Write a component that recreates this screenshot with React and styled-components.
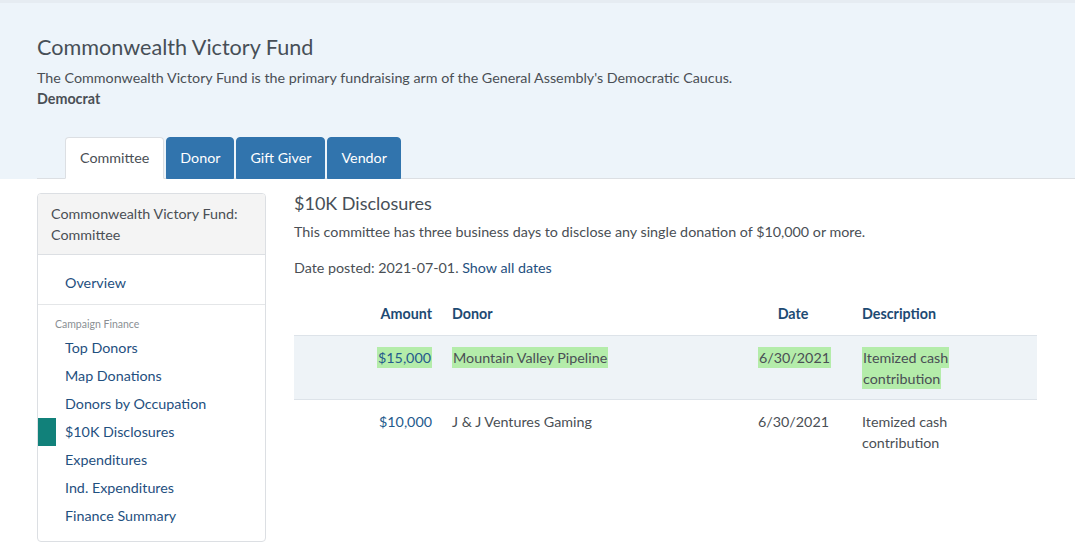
import React from "react";
import styled, { createGlobalStyle } from "styled-components";

const GlobalStyle = createGlobalStyle`
  body {
    margin: 0;
    background: #fff;
    font-family: Lato, "Open Sans", "Liberation Sans", sans-serif;
    font-size: 14.3px;
    line-height: 20px;
    color: #4a4f55;
  }
  * { box-sizing: border-box; }
`;

const Header = styled.header`
  background: #edf4fa;
  border-top: 3px solid #e6ecf2;
  padding: 31px 0 0 37px;
`;

const Title = styled.h1`
  margin: 0;
  font-size: 21.6px;
  line-height: 26px;
  font-weight: 400;
  color: #474f57;
`;

const Blurb = styled.p`
  margin: 7px 0 0;
  line-height: 21px;
`;

const Party = styled.div`
  font-weight: 700;
  line-height: 21px;
`;

const Tabs = styled.nav`
  display: flex;
  gap: 2px;
  margin-top: 28px;
  padding-left: 28px;
  border-bottom: 1px solid #dcdfe3;
`;

const Tab = styled.a`
  display: block;
  padding: 10px ${(p) => (p.$active ? "14px" : "13px")};
  margin-bottom: -1px;
  border-radius: 4px 4px 0 0;
  border: 1px solid ${(p) => (p.$active ? "#dcdfe3" : "#3174ad")};
  border-bottom-color: ${(p) => (p.$active ? "#fff" : "#3174ad")};
  background: ${(p) => (p.$active ? "#fff" : "#3174ad")};
  color: ${(p) => (p.$active ? "#4a4f55" : "#fff")};
  text-decoration: none;
  line-height: 20px;
`;

const Body = styled.div`
  display: flex;
  gap: 28px;
  padding: 14px 39px 0 37px;
`;

const Panel = styled.aside`
  flex: 0 0 229px;
  height: 349px;
  border: 1px solid #dcdfe3;
  border-radius: 4px;
  overflow: hidden;
`;

const PanelHeading = styled.div`
  background: #f4f4f4;
  border-bottom: 1px solid #dcdfe3;
  padding: 9px 13px;
  line-height: 21px;
`;

const Section = styled.div`
  padding: ${(p) => p.$pad};
  border-bottom: ${(p) => (p.$divided ? "1px solid #e4e6e8" : "none")};
`;

const SideLabel = styled.div`
  padding-left: 17px;
  font-size: 10.5px;
  line-height: 14px;
  color: #8a8f94;
  margin-bottom: 3px;
`;

const SideLink = styled.a`
  display: block;
  padding-left: 27px;
  line-height: 28px;
  color: #1f5080;
  text-decoration: none;
  box-shadow: ${(p) => (p.$active ? "inset 18px 0 0 #11817a" : "none")};
`;

const Main = styled.main`
  flex: 1;
`;

const Heading = styled.h2`
  margin: 0;
  font-size: 18px;
  line-height: 20px;
  font-weight: 400;
  color: #474f57;
`;

const Note = styled.p`
  margin: ${(p) => p.$m};
`;

const Link = styled.a`
  color: #1f5080;
  text-decoration: none;
`;

const Table = styled.div`
  margin-top: 18px;
`;

const Row = styled.div`
  display: grid;
  grid-template-columns: 148px 306px 90px 199px;
  background: ${(p) => (p.$shaded ? "#eef3f7" : "transparent")};
  border-bottom: ${(p) => (p.$last ? "none" : "1px solid #dde3e9")};
`;

const Cell = styled.div`
  padding: ${(p) => (p.$head ? "8px 10px 11px" : "10.5px 10px")};
  padding-left: ${(p) => (p.$wide ? "24px" : "10px")};
  padding-right: ${(p) => (p.$wide ? "60px" : "10px")};
  line-height: ${(p) => (p.$head ? "20px" : "21px")};
  text-align: ${(p) => p.$align || "left"};
  font-weight: ${(p) => (p.$head ? 700 : 400)};
  color: ${(p) => (p.$head ? "#1d4a73" : p.$blue ? "#245a8c" : "#4a4f55")};
`;

const Mark = styled.mark`
  background: #b4ecaa;
  color: inherit;
  padding: 2px 1px;
  -webkit-box-decoration-break: clone;
  box-decoration-break: clone;
`;

const rows = [
  { amount: "$15,000", donor: "Mountain Valley Pipeline", date: "6/30/2021", desc: "Itemized cash contribution", hit: true },
  { amount: "$10,000", donor: "J & J Ventures Gaming", date: "6/30/2021", desc: "Itemized cash contribution" },
];

const financeLinks = [
  "Top Donors",
  "Map Donations",
  "Donors by Occupation",
  "$10K Disclosures",
  "Expenditures",
  "Ind. Expenditures",
  "Finance Summary",
];

const Hl = ({ on, children }) => (on ? <Mark>{children}</Mark> : children);

export default function App() {
  return (
    <>
      <GlobalStyle />
      <Header>
        <Title>Commonwealth Victory Fund</Title>
        <Blurb>
          The Commonwealth Victory Fund is the primary fundraising arm of the General
          Assembly's Democratic Caucus.
        </Blurb>
        <Party>Democrat</Party>
        <Tabs>
          <Tab $active>Committee</Tab>
          <Tab>Donor</Tab>
          <Tab>Gift Giver</Tab>
          <Tab>Vendor</Tab>
        </Tabs>
      </Header>
      <Body>
        <Panel>
          <PanelHeading>Commonwealth Victory Fund: Committee</PanelHeading>
          <Section $pad="14px 0 7px" $divided>
            <SideLink>Overview</SideLink>
          </Section>
          <Section $pad="12px 0 12px">
            <SideLabel>Campaign Finance</SideLabel>
            {financeLinks.map((l) => (
              <SideLink key={l} $active={l === "$10K Disclosures"}>
                {l}
              </SideLink>
            ))}
          </Section>
        </Panel>
        <Main>
          <Heading>$10K Disclosures</Heading>
          <Note $m="9px 0 0">
            This committee has three business days to disclose any single donation of
            $10,000 or more.
          </Note>
          <Note $m="16px 0 0">
            Date posted: 2021-07-01. <Link>Show all dates</Link>
          </Note>
          <Table>
            <Row>
              <Cell $head $align="right">Amount</Cell>
              <Cell $head>Donor</Cell>
              <Cell $head $align="center">Date</Cell>
              <Cell $head $wide>Description</Cell>
            </Row>
            {rows.map((r, i) => (
              <Row key={i} $shaded={i === 0} $last={i === rows.length - 1}>
                <Cell $align="right" $blue>
                  <Hl on={r.hit}>{r.amount}</Hl>
                </Cell>
                <Cell>
                  <Hl on={r.hit}>{r.donor}</Hl>
                </Cell>
                <Cell $align="right">
                  <Hl on={r.hit}>{r.date}</Hl>
                </Cell>
                <Cell $wide>
                  <Hl on={r.hit}>{r.desc}</Hl>
                </Cell>
              </Row>
            ))}
          </Table>
        </Main>
      </Body>
    </>
  );
}
